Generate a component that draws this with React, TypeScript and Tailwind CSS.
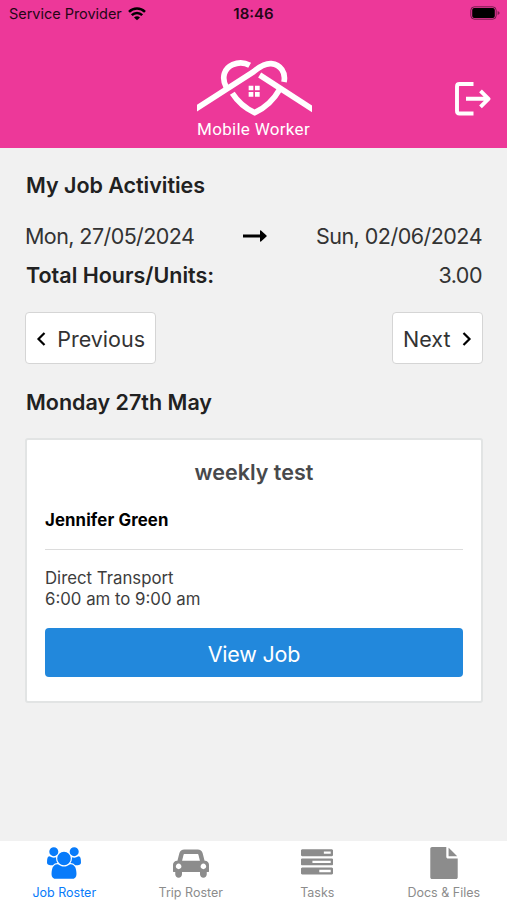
import clsx from 'clsx'
import { useState } from 'react'

interface Tab {
  label: string
  viewBox: string
  iconClass: string
  path: string
}

const TABS: Tab[] = [
  {
    label: 'Job Roster',
    viewBox: '0 0 1920 1792',
    iconClass: 'h-8 w-[34px]',
    path: 'M593 896q-162 5-265 128h-134q-82 0-138-40.5t-56-118.5q0-353 124-353 6 0 43.5 21t97.5 42.5 119 21.5q67 0 133-23-5 37-5 66 0 139 81 256zM1664 1533q0 120-73 189.5t-194 69.5h-874q-121 0-194-69.5t-73-189.5q0-53 3.5-103.5t14-109 26.5-108.5 43-97.5 62-81 85.5-53.5 111.5-20q10 0 43 21.5t73 48 107 48 135 21.5 135-21.5 107-48 73-48 43-21.5q61 0 111.5 20t85.5 53.5 62 81 43 97.5 26.5 108.5 14 109 3.5 103.5zM640 256q0 106-75 181t-181 75-181-75-75-181 75-181 181-75 181 75 75 181zM1344 640q0 159-112.5 271.5t-271.5 112.5-271.5-112.5-112.5-271.5 112.5-271.5 271.5-112.5 271.5 112.5 112.5 271.5zM1920 865q0 78-56 118.5t-138 40.5h-134q-103-123-265-128 81-117 81-256 0-29-5-66 66 23 133 23 59 0 119-21.5t97.5-42.5 43.5-21q124 0 124 353zM1792 256q0 106-75 181t-181 75-181-75-75-181 75-181 181-75 181 75 75 181z',
  },
  {
    label: 'Trip Roster',
    viewBox: '0 0 2048 1792',
    iconClass: 'h-8 w-9',
    path: 'M480 1088q0-66-47-113t-113-47-113 47-47 113 47 113 113 47 113-47 47-113zM516 768h1016l-89-357q-2-8-14-17.5t-21-9.5h-768q-9 0-21 9.5t-14 17.5zM1888 1088q0-66-47-113t-113-47-113 47-47 113 47 113 113 47 113-47 47-113zM2048 992v384q0 14-9 23t-23 9h-96v128q0 80-56 136t-136 56-136-56-56-136v-128h-1024v128q0 80-56 136t-136 56-136-56-56-136v-128h-96q-14 0-23-9t-9-23v-384q0-93 65.5-158.5t158.5-65.5h28l105-419q23-94 104-157.5t179-63.5h768q98 0 179 63.5t104 157.5l105 419h28q93 0 158.5 65.5t65.5 158.5z',
  },
  {
    label: 'Tasks',
    viewBox: '0 0 1792 1792',
    iconClass: 'h-8 w-8',
    path: 'M1024 1408h640v-128h-640v128zM640 896h1024v-128h-1024v128zM1280 384h384v-128h-384v128zM1792 1216v256q0 26-19 45t-45 19h-1664q-26 0-45-19t-19-45v-256q0-26 19-45t45-19h1664q26 0 45 19t19 45zM1792 704v256q0 26-19 45t-45 19h-1664q-26 0-45-19t-19-45v-256q0-26 19-45t45-19h1664q26 0 45 19t19 45zM1792 192v256q0 26-19 45t-45 19h-1664q-26 0-45-19t-19-45v-256q0-26 19-45t45-19h1664q26 0 45 19t19 45z',
  },
  {
    label: 'Docs & Files',
    viewBox: '0 0 1792 1792',
    iconClass: 'h-8 w-8',
    path: 'M1152 512v-472q22 14 36 28l408 408q14 14 28 36h-472zM1024 544q0 40 28 68t68 28h544v1056q0 40-28 68t-68 28h-1344q-40 0-68-28t-28-68v-1600q0-40 28-68t68-28h800v544z',
  },
]

function WifiIcon() {
  return (
    <svg viewBox="0 0 18 14" className="h-3.5 w-[18px]" fill="none" stroke="currentColor" strokeWidth="2.5">
      <path d="M1 4.8a11.4 11.4 0 0 1 16 0M3.800 8.2a7.300 7.300 0 0 1 10.400 0" />
      <path d="M9 13.2 6 10.6a4.3 4.3 0 0 1 6 0z" fill="currentColor" stroke="none" />
    </svg>
  )
}

function BatteryIcon() {
  return (
    <svg viewBox="0 0 30 14" className="h-3.5 w-[30px]">
      <rect x="0.8" y="0.8" width="25.4" height="12.4" rx="3.6" fill="none" stroke="#000" strokeOpacity="0.5" />
      <rect x="2.2" y="2.1" width="22.6" height="9.8" rx="2" />
      <path d="M27.6 5v4c1.6-.5 2-1.3 2-2s-.4-1.5-2-2z" fillOpacity="0.45" />
    </svg>
  )
}

function Logo() {
  return (
    <svg viewBox="36 30 345 171" className="h-[57px] w-[115px]" fill="none" stroke="#fff" strokeWidth="17">
      <path d="M26 181 206 65C231 44 247 40 259 41 287 44 303 68 297 96" />
      <path d="M194 46C178 37 159 37 143 44 118 55 108 82 124 112" />
      <path d="M142 130C156 152 178 174 209 188 243 172 266 150 284 118" />
      <path d="M224 75 391 183" />
      <path d="M191 107h14v14h-14zM210 107h14v14h-14zM191 126h14v14h-14zM210 126h14v14h-14z" fill="#fff" stroke="none" />
    </svg>
  )
}

function Header() {
  return (
    <header className="h-[148px] flex-shrink-0 bg-[#ed3899]">
      <div className="grid h-7 grid-cols-3 items-center pl-[9px] pr-[7px] text-[15px] text-[#250616]">
        <div className="flex items-center gap-1.5">
          <span className="whitespace-nowrap text-[14.5px] tracking-[-0.03px]">Service Provider</span>
          <span className="text-black"><WifiIcon /></span>
        </div>
        <span className="pr-0.5 text-center font-semibold">18:46</span>
        <div className="flex justify-end pb-0.5"><BatteryIcon /></div>
      </div>
      <div className="grid grid-cols-[1fr_auto_1fr] pr-4">
        <div />
        <div className="flex flex-col items-center pl-[18px] pt-8">
          <Logo />
          <span className="-ml-0.5 font-['Roboto',sans-serif] text-[17px] leading-6 tracking-[0.3px] text-white">Mobile Worker</span>
        </div>
        <button className="self-start justify-self-end pt-[54px]" aria-label="Log out">
          <svg viewBox="0 0 36 34" className="h-[34px] w-9" fill="none" stroke="#fff" strokeWidth="3.9" strokeLinejoin="round">
            <path d="M18.5 2H4.5Q2 2 2 4.5V29Q2 31.5 4.5 31.5H18.5M11 16.8H34M25.5 8.8l8 8-8 8" />
          </svg>
        </button>
      </div>
    </header>
  )
}

function JobCard() {
  return (
    <article className="-mx-px mt-5 h-[265px] rounded-[3px] border-2 border-[#e2e4e4] bg-white px-[18px]">
      <h3 className="pt-[17px] text-center text-[21.5px] font-semibold leading-[30px] text-[#48494b]">weekly test</h3>
      <p className="mt-[22px] text-[16.8px] font-bold leading-[22px] tracking-[0.12px] text-black">Jennifer Green</p>
      <hr className="mt-[18px] border-[#dcdcdc]" />
      <p className="mt-[18px] text-[16.8px] leading-[21px] text-[#3d3d3d]">
        Direct Transport
        <br />
        6:00 am to 9:00 am
      </p>
      <button className="mt-[18px] block h-[49px] w-full rounded bg-[#2288dc] pt-0.5 text-[21.5px] tracking-[-0.2px] text-white">
        View Job
      </button>
    </article>
  )
}

function TabBar() {
  const [active, setActive] = useState('Job Roster')

  return (
    <nav className="grid h-[59px] flex-shrink-0 grid-cols-4 bg-white pl-px">
      {TABS.map((tab) => (
        <button
          key={tab.label}
          onClick={() => setActive(tab.label)}
          className={clsx(
            'flex flex-col items-center pt-1.5 text-[12.5px]',
            active === tab.label ? 'text-[#087bfa]' : 'text-[#8c8c8c]',
          )}
        >
          <svg viewBox={tab.viewBox} className={clsx('flex-shrink-0', tab.iconClass)} fill="currentColor">
            <path d={tab.path} />
          </svg>
          <span className="mt-1.5 leading-4">{tab.label}</span>
        </button>
      ))}
    </nav>
  )
}

export default function App() {
  return (
    <div className="flex h-[900px] w-[507px] flex-col overflow-hidden bg-[#f1f1f1] font-['Inter',sans-serif] text-[#212121]">
      <Header />
      <main className="flex-1 pl-[26px] pr-[25px] pt-[21px] text-[21.5px] leading-8">
        <h1 className="font-semibold tracking-[-0.03px]">My Job Activities</h1>
        <div className="mt-[19px] flex items-center justify-between text-[#333]">
          <span className="-ml-px tracking-[-0.58px]">Mon, 27/05/2024</span>
          <svg viewBox="0 0 24 12" className="h-3 w-6" fill="#000">
            <path d="M0 4.5h17V1q0-1 1-.5l5.5 5q.5.5 0 1l-5.5 5q-1 .5-1-.5V7.5H0z" />
          </svg>
          <span className="tracking-[-0.52px]">Sun, 02/06/2024</span>
        </div>
        <div className="mt-[7px] flex justify-between">
          <span className="font-semibold">Total Hours/Units:</span>
          <span className="tracking-[-0.5px] text-[#333]">3.00</span>
        </div>
        <div className="-mx-px mt-[21px] flex justify-between text-[#333]">
          <button className="flex h-[52px] w-[131px] items-center justify-between rounded border border-[#d5d5d5] bg-white px-2.5 pt-0.5">
            <svg viewBox="0 0 10 14" className="h-3.5 w-2.5" fill="none" stroke="#000" strokeWidth="2.2">
              <path d="M8.5 1 2.5 7l6 6" />
            </svg>
            Previous
          </button>
          <button className="flex h-[52px] w-[91px] items-center justify-between rounded border border-[#d5d5d5] bg-white px-2.5 pt-0.5">
            Next
            <svg viewBox="0 0 10 14" className="h-3.5 w-2.5" fill="none" stroke="#000" strokeWidth="2.2">
              <path d="m1.5 1 6 6-6 6" />
            </svg>
          </button>
        </div>
        <h2 className="mt-[22px] font-semibold">Monday 27th May</h2>
        <JobCard />
      </main>
      <TabBar />
    </div>
  )
}
